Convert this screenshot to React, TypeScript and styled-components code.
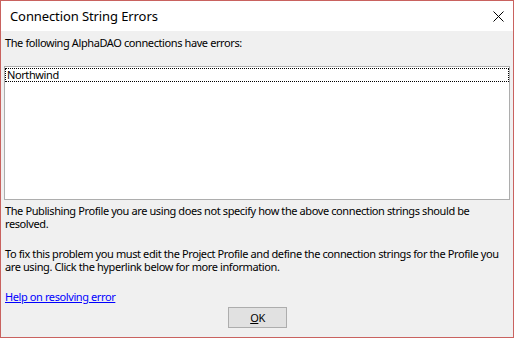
import React from "react";
import styled, { createGlobalStyle } from "styled-components";

const Global = createGlobalStyle`
  html, body { margin: 0; padding: 0; background: #ffffff; }
  body { font-family: "Noto Sans", sans-serif; }
`;

const Window = styled.div`
  width: 514px;
  height: 338px;
  box-sizing: border-box;
  border: 1px solid #c9625f;
  display: flex;
  flex-direction: column;
  background: #f0f0f0;
  font-family: "Noto Sans", sans-serif;
  color: #000;
`;

const TitleBar = styled.div`
  height: 30px;
  background: #ffffff;
  display: flex;
  align-items: center;
  justify-content: space-between;
  padding: 0 9px 0 9px;
  flex-shrink: 0;
`;

const Title = styled.div`
  font-size: 13px;
  letter-spacing: -0.1px;
  color: #000;
`;

const Close = styled.div`
  width: 12px;
  height: 12px;
  display: flex;
  align-items: center;
  justify-content: center;
`;

const Body = styled.div`
  flex: 1;
  display: flex;
  flex-direction: column;
  padding: 5px 3px 0 3px;
`;

const Text = styled.p<{ $mt?: number }>`
  margin: ${(p) => p.$mt ?? 0}px 0 0 1px;
  font-size: 11px;
  letter-spacing: -0.4px;
  line-height: 13px;
`;

const ListBox = styled.div`
  margin-top: 17px;
  height: 134px;
  box-sizing: border-box;
  border: 1px solid #adadad;
  background: #ffffff;
  padding: 0;
`;

const ListItem = styled.div`
  margin: 1px 0 0 0;
  height: 14px;
  box-sizing: border-box;
  border: 1px dotted #000;
  font-size: 11px;
  letter-spacing: -0.4px;
  line-height: 12px;
  padding-left: 1px;
`;

const Link = styled.a`
  margin: 17px 0 0 1px;
  font-size: 11px;
  letter-spacing: -0.4px;
  line-height: 13px;
  color: #0000ff;
  text-decoration: underline;
  align-self: flex-start;
`;

const ButtonRow = styled.div`
  display: flex;
  justify-content: center;
  margin-top: 4px;
  padding-left: 1px;
`;

const Button = styled.button`
  width: 59px;
  height: 21px;
  box-sizing: border-box;
  background: #e1e1e1;
  border: 1px solid #adadad;
  font-family: "Noto Sans", sans-serif;
  font-size: 11px;
  letter-spacing: -0.4px;
  line-height: 13px;
  padding: 0;
  color: #000;
  u { text-decoration: underline; }
`;

export default function App() {
  return (
    <>
      <Global />
      <Window>
        <TitleBar>
          <Title>Connection String Errors</Title>
          <Close>
            <svg width="11" height="11" viewBox="0 0 11 11">
              <path d="M0.5 0.5 L10.5 10.5 M10.5 0.5 L0.5 10.5" stroke="#000" strokeWidth="1" />
            </svg>
          </Close>
        </TitleBar>
        <Body>
          <Text>The following AlphaDAO connections have errors:</Text>
          <ListBox>
            <ListItem>Northwind</ListItem>
          </ListBox>
          <Text $mt={4}>
            The Publishing Profile you are using does not specify how the above connection strings should be
            resolved.
          </Text>
          <Text $mt={17}>
            To fix this problem you must edit the Project Profile and define the connection strings for the Profile you
            are using. Click the hyperlink below for more information.
          </Text>
          <Link href="#">Help on resolving error</Link>
          <ButtonRow>
            <Button>
              <u>O</u>K
            </Button>
          </ButtonRow>
        </Body>
      </Window>
    </>
  );
}
